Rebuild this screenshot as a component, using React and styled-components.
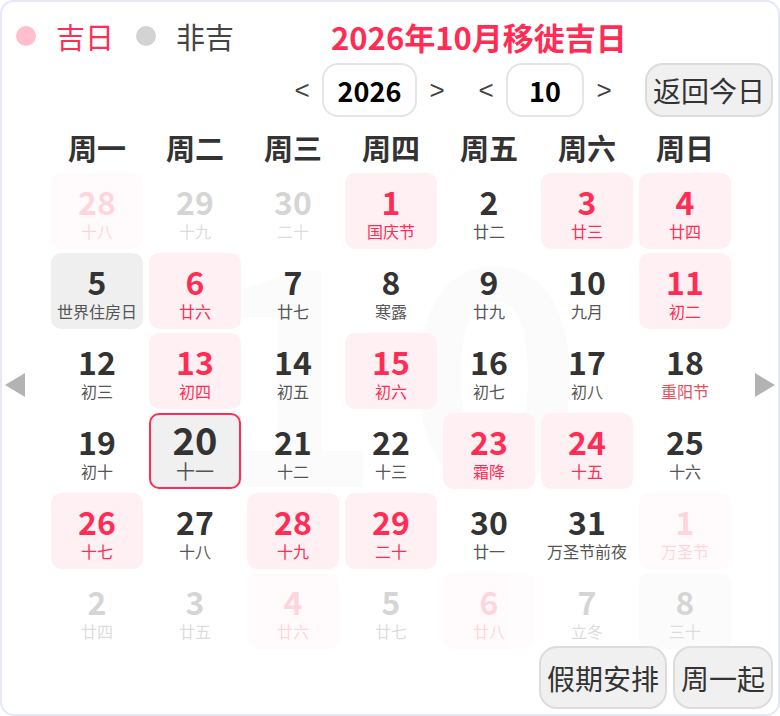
import styled, { createGlobalStyle } from "styled-components";

const RED = "#ff2d55";

const GlobalStyle = createGlobalStyle`
  html, body {
    margin: 0;
    padding: 0;
    background: #ffffff;
  }
  body {
    font-family: "Noto Sans CJK SC", "Noto Sans", sans-serif;
    color: #333;
  }
`;

const Card = styled.div`
  box-sizing: border-box;
  width: 780px;
  height: 716px;
  border: 2px solid #e6e9f5;
  border-radius: 14px;
  background: #fff;
  display: flex;
  flex-direction: column;
  overflow: hidden;
`;

const TopBar = styled.div`
  display: flex;
  align-items: center;
  height: 44px;
  margin-top: 12px;
  padding-left: 14px;
`;

const Legend = styled.div`
  display: flex;
  align-items: center;
  gap: 20px;
  margin-right: 22px;
  font-size: 29px;
  color: ${(p) => (p.$good ? RED : "#444")};
`;

const Dot = styled.span`
  width: 20px;
  height: 20px;
  border-radius: 50%;
  background: ${(p) => (p.$good ? "#ffc0cb" : "#d3d3d3")};
`;

const Title = styled.h1`
  margin: 0 0 0 75px;
  font-size: 31px;
  font-weight: 700;
  color: ${RED};
`;

const Controls = styled.div`
  display: flex;
  justify-content: flex-end;
  align-items: center;
  gap: 33px;
  height: 54px;
  margin-top: 5px;
  padding-right: 5px;
`;

const NavGroup = styled.div`
  display: flex;
  align-items: center;
  gap: 12px;
`;

const Arrow = styled.span`
  width: 16px;
  text-align: center;
  font-family: "Liberation Sans", sans-serif;
  font-size: 26px;
  color: #444;
  cursor: pointer;
`;

const ValueBox = styled.div`
  box-sizing: border-box;
  width: ${(p) => p.$w}px;
  height: 54px;
  border: 2px solid #e4e4ea;
  border-radius: 16px;
  display: flex;
  align-items: center;
  justify-content: center;
  font-size: 27px;
  font-weight: 700;
  color: #000;
`;

const GrayButton = styled.button`
  box-sizing: border-box;
  height: ${(p) => p.$h || 54}px;
  padding: 0 6px;
  border: 2px solid #dcdcdc;
  border-radius: 18px;
  background: #f0f0f0;
  font-family: "Noto Sans CJK SC", sans-serif;
  font-size: 28px;
  color: #333;
  cursor: pointer;
`;

const Body = styled.div`
  display: flex;
  margin-top: 12px;
`;

const Side = styled.div`
  box-sizing: border-box;
  width: ${(p) => p.$w}px;
  padding-left: ${(p) => p.$pl}px;
  padding-bottom: 8px;
  display: flex;
  align-items: center;
`;

const Triangle = styled.span`
  width: 0;
  height: 0;
  border-top: 12px solid transparent;
  border-bottom: 12px solid transparent;
  ${(p) =>
    p.$left
      ? "border-right: 20px solid #b3b3b3;"
      : "border-left: 20px solid #b3b3b3;"}
  cursor: pointer;
`;

const Center = styled.div`
  width: 680px;
  display: flex;
  flex-direction: column;
`;

const WeekRow = styled.div`
  display: grid;
  grid-template-columns: repeat(7, 92px);
  column-gap: 6px;
  height: 36px;
  margin-bottom: 8px;
`;

const WeekLabel = styled.div`
  text-align: center;
  font-size: 29px;
  font-weight: 700;
  line-height: 36px;
  color: #333;
`;

const GridWrap = styled.div`
  position: relative;
`;

const Watermark = styled.div`
  position: absolute;
  inset: 0;
  display: flex;
  align-items: center;
  justify-content: center;
  padding: 0 0 110px 30px;
  font-size: 300px;
  font-weight: 700;
  letter-spacing: 24px;
  color: #fbfbfb;
  pointer-events: none;
  user-select: none;
`;

const Grid = styled.div`
  position: relative;
  display: grid;
  grid-template-columns: repeat(7, 92px);
  grid-auto-rows: 76px;
  gap: 4px 6px;
`;

const cellBg = (p) => {
  if (p.$today) return "#f0f0f0";
  if (p.$type === "good") return "#fff0f3";
  if (p.$type === "gray") return "#efefef";
  return "transparent";
};

const Cell = styled.div`
  box-sizing: border-box;
  display: flex;
  flex-direction: column;
  align-items: center;
  padding-top: ${(p) => (p.$today ? 3 : 9)}px;
  border-radius: 10px;
  background: ${cellBg};
  border: ${(p) => (p.$today ? `2px solid ${RED}` : "none")};
  opacity: ${(p) => (p.$other ? 0.2 : 1)};
  cursor: pointer;
`;

const DayNum = styled.div`
  font-size: ${(p) => (p.$today ? 38 : 32)}px;
  font-weight: 700;
  line-height: ${(p) => (p.$today ? 42 : 38)}px;
  color: ${(p) => (p.$good ? RED : "#333")};
`;

const Lunar = styled.div`
  font-size: ${(p) => (p.$today ? 19 : 16)}px;
  line-height: 22px;
  white-space: nowrap;
  color: ${(p) => (p.$good ? RED : p.$fest ? "#e5505c" : "#555")};
`;

const Footer = styled.div`
  display: flex;
  justify-content: flex-end;
  gap: 6px;
  margin-top: -3px;
  padding-right: 5px;
`;

const days = [
  { d: 28, l: "十八", t: "good", o: true },
  { d: 29, l: "十九", o: true },
  { d: 30, l: "二十", o: true },
  { d: 1, l: "国庆节", t: "good" },
  { d: 2, l: "廿二" },
  { d: 3, l: "廿三", t: "good" },
  { d: 4, l: "廿四", t: "good" },
  { d: 5, l: "世界住房日", t: "gray" },
  { d: 6, l: "廿六", t: "good" },
  { d: 7, l: "廿七" },
  { d: 8, l: "寒露" },
  { d: 9, l: "廿九" },
  { d: 10, l: "九月" },
  { d: 11, l: "初二", t: "good" },
  { d: 12, l: "初三" },
  { d: 13, l: "初四", t: "good" },
  { d: 14, l: "初五" },
  { d: 15, l: "初六", t: "good" },
  { d: 16, l: "初七" },
  { d: 17, l: "初八" },
  { d: 18, l: "重阳节", f: true },
  { d: 19, l: "初十" },
  { d: 20, l: "十一", today: true },
  { d: 21, l: "十二" },
  { d: 22, l: "十三" },
  { d: 23, l: "霜降", t: "good" },
  { d: 24, l: "十五", t: "good" },
  { d: 25, l: "十六" },
  { d: 26, l: "十七", t: "good" },
  { d: 27, l: "十八" },
  { d: 28, l: "十九", t: "good" },
  { d: 29, l: "二十", t: "good" },
  { d: 30, l: "廿一" },
  { d: 31, l: "万圣节前夜" },
  { d: 1, l: "万圣节", t: "good", o: true },
  { d: 2, l: "廿四", o: true },
  { d: 3, l: "廿五", o: true },
  { d: 4, l: "廿六", t: "good", o: true },
  { d: 5, l: "廿七", o: true },
  { d: 6, l: "廿八", t: "good", o: true },
  { d: 7, l: "立冬", o: true },
  { d: 8, l: "三十", t: "gray", o: true },
];

const weekdays = ["周一", "周二", "周三", "周四", "周五", "周六", "周日"];

export default function App() {
  return (
    <>
      <GlobalStyle />
      <Card>
        <TopBar>
          <Legend $good>
            <Dot $good />
            吉日
          </Legend>
          <Legend>
            <Dot />
            非吉
          </Legend>
          <Title>2026年10月移徙吉日</Title>
        </TopBar>

        <Controls>
          <NavGroup>
            <Arrow>&lt;</Arrow>
            <ValueBox $w={95}>2026</ValueBox>
            <Arrow>&gt;</Arrow>
          </NavGroup>
          <NavGroup>
            <Arrow>&lt;</Arrow>
            <ValueBox $w={78}>10</ValueBox>
            <Arrow>&gt;</Arrow>
          </NavGroup>
          <GrayButton>返回今日</GrayButton>
        </Controls>

        <Body>
          <Side $w={49} $pl={3}>
            <Triangle $left />
          </Side>
          <Center>
            <WeekRow>
              {weekdays.map((w) => (
                <WeekLabel key={w}>{w}</WeekLabel>
              ))}
            </WeekRow>
            <GridWrap>
              <Watermark aria-hidden="true">10</Watermark>
              <Grid>
                {days.map((c, i) => (
                  <Cell
                    key={i}
                    $type={c.t}
                    $other={c.o}
                    $today={c.today}
                  >
                    <DayNum $good={c.t === "good"} $today={c.today}>
                      {c.d}
                    </DayNum>
                    <Lunar
                      $good={c.t === "good"}
                      $fest={c.f}
                      $today={c.today}
                    >
                      {c.l}
                    </Lunar>
                  </Cell>
                ))}
              </Grid>
            </GridWrap>
          </Center>
          <Side $w={47} $pl={24}>
            <Triangle />
          </Side>
        </Body>

        <Footer>
          <GrayButton $h={63}>假期安排</GrayButton>
          <GrayButton $h={63}>周一起</GrayButton>
        </Footer>
      </Card>
    </>
  );
}
